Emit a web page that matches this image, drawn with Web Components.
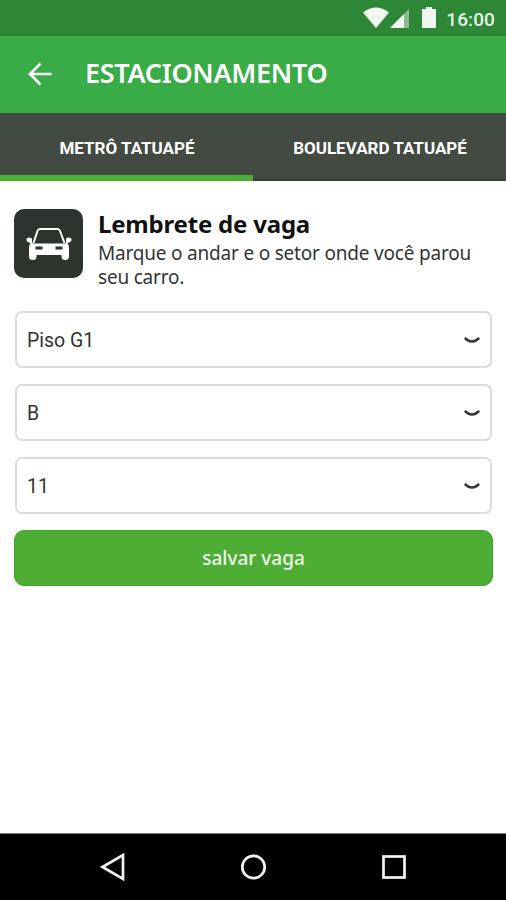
<!DOCTYPE html>
<html lang="pt-BR">
<head>
<meta charset="utf-8">
<title>Estacionamento</title>
<style>
    body {
        margin: 0;
        background: #fff;
    }
</style>
</head>
<body>
<parking-app></parking-app>

<script>
    const define = (name, html) => {
        const tmpl = document.createElement('template');
        tmpl.innerHTML = html;

        window.customElements.define(name, class extends HTMLElement {
            constructor() {
                super();
                this.attachShadow({ mode: 'open' });
                this.shadowRoot.appendChild(document.importNode(tmpl.content, true));
            }
        });
    };

    define('status-bar', /*html*/`
        <style>
            :host {
                display: flex;
                align-items: center;
                justify-content: flex-end;
                height: 36px;
                padding-right: 11px;
                box-sizing: border-box;
                background: #2d8736;
                color: #e6f3e6;
                font: 500 19px/36px Roboto, sans-serif;
            }
            svg { display: block; margin-right: 7px; }
            span { padding-top: 3px; letter-spacing: .1px; }
        </style>
        <svg width="76" height="36" viewBox="0 0 76 36" fill="#f1f8f1">
            <path d="M0 12.4Q13 2.8 26 12.4L13 28Z"/>
            <path d="M46 9v19H27Z" fill="#8bbd90"/>
            <path d="M41 14v14H27Z"/>
            <path d="M59 9h4V7h6v2h4v19H59Z"/>
        </svg>
        <span>16:00</span>`);

    define('app-header', /*html*/`
        <style>
            :host {
                display: flex;
                align-items: center;
                height: 77px;
                padding: 0 0 2px 28px;
                box-sizing: border-box;
                background: #39ab47;
                color: #fff;
            }
            svg { display: block; margin-right: 33px; }
            h1 {
                margin: 0;
                padding-bottom: 2px;
                font-size: 27px;
                font-weight: 600;
                line-height: 36px;
                letter-spacing: -.3px;
                white-space: nowrap;
            }
        </style>
        <svg width="24" height="24" viewBox="0 0 24 24" fill="none" stroke="#fff" stroke-width="2.6">
            <path d="M23.5 12H2M12.5 1.5L2 12l10.500 10.500"/>
        </svg>
        <h1><slot></slot></h1>`);

    define('tab-bar', /*html*/`
        <style>
            :host {
                display: flex;
                height: 68px;
                background: #434a42;
            }
            ::slotted(*) { flex: 1; }
        </style>
        <slot></slot>`);

    define('tab-item', /*html*/`
        <style>
            :host {
                display: flex;
                align-items: center;
                justify-content: center;
                box-sizing: border-box;
                padding: 3px 0 0 1px;
                border-bottom: 2px solid #3a3c39;
                color: #fff;
                font: 700 17px/24px Roboto, sans-serif;
                white-space: nowrap;
            }
            :host([selected]) {
                padding-top: 7px;
                border-bottom: 6px solid #4dae35;
            }
        </style>
        <slot></slot>`);

    define('reminder-intro', /*html*/`
        <style>
            :host { display: flex; gap: 15px; }
            .tile {
                display: block;
                flex: none;
                width: 69px;
                height: 69px;
                border-radius: 10px;
                background: #2c342d;
            }
            h2, p { margin: 0; color: #111; white-space: nowrap; }
            h2 {
                margin-top: -1px;
                padding-bottom: 1px;
                font-size: 24px;
                font-weight: 700;
                line-height: 32px;
                letter-spacing: -.2px;
            }
            p {
                color: #333;
                font-size: 19px;
                line-height: 24px;
                letter-spacing: -.2px;
            }
        </style>
        <svg class="tile" viewBox="0 0 69 69">
            <path d="M19.500 34L23.500 22Q24.200 20 26 20H43.500Q45.300 20 46 22L50.500 34" fill="none" stroke="#fff" stroke-width="2"/>
            <path fill="#fff" fill-rule="evenodd" d="M19 34.500h32l1-1V30q0-1.500 2.500-1.500 3 0 3 2 0 2.500-3 3l-1 .5q1.500 2 1.500 5v8.500q0 3.500-3.800 3.500-3.700 0-3.700-3.500V46h-25v1.500q0 3.500-3.700 3.500-3.800 0-3.800-3.500V39q0-3 1.500-5l-1-.500q-3-.5-3-3 0-2 3-2 2.500 0 2.500 1.500v3.500ZM21.500 37.500v3h7v-3ZM41.500 37.500v3h7v-3Z"/>
        </svg>
        <div>
            <h2><slot name="title"></slot></h2>
            <p><slot></slot></p>
        </div>`);

    define('select-field', /*html*/`
        <style>
            :host {
                display: flex;
                align-items: center;
                justify-content: space-between;
                height: 57px;
                margin: 0 1px;
                padding: 0 10px;
                box-sizing: border-box;
                border: 2px solid #dcdcdc;
                border-radius: 7px;
                color: #333;
                font: 400 19.500px/28px Roboto, sans-serif;
            }
            span { padding-top: 2px; }
            svg { display: block; }
        </style>
        <span><slot></slot></span>
        <svg width="16" height="8" viewBox="0 0 16 8" fill="none" stroke="#333" stroke-width="2.600">
            <path d="M.8 2L4 4.300Q8 6.800 12 4.300L15.200 2"/>
        </svg>`);

    define('save-button', /*html*/`
        <style>
            :host { display: block; }
            button {
                display: block;
                width: 100%;
                height: 56px;
                padding: 0;
                border: 1px solid #3fa526;
                border-radius: 10px;
                background: #4dad35;
                color: #f0faec;
                font: inherit;
                font-size: 19px;
                font-weight: 500;
            }
        </style>
        <button type="button"><slot></slot></button>`);

    define('nav-bar', /*html*/`
        <style>
            :host {
                display: flex;
                align-items: center;
                justify-content: space-between;
                height: 67px;
                padding: 0 97px 0 99px;
                box-sizing: border-box;
                border-top: 1px solid #777;
                background: #000;
            }
            svg { fill: none; stroke: #f2f2f2; stroke-width: 2.700; }
        </style>
        <svg width="30" height="30" viewBox="0 0 30 30"><path d="M3.500 15L24 3v24Z"/></svg>
        <svg width="30" height="30" viewBox="0 0 30 30"><circle cx="14.500" cy="15" r="11.200"/></svg>
        <svg width="30" height="30" viewBox="0 0 30 30"><rect x="4.500" y="4.500" width="21" height="21"/></svg>`);

    define('parking-app', /*html*/`
        <style>
            :host {
                display: flex;
                flex-direction: column;
                height: 900px;
                font-family: "Noto Sans", "Open Sans", sans-serif;
            }
            main {
                flex: 1;
                display: flex;
                flex-direction: column;
                padding: 28px 13px 0 14px;
            }
            form {
                display: flex;
                flex-direction: column;
                gap: 16px;
                margin-top: 22px;
            }
        </style>
        <status-bar></status-bar>
        <app-header>ESTACIONAMENTO</app-header>
        <tab-bar>
            <tab-item selected>METRÔ TATUAPÉ</tab-item>
            <tab-item>BOULEVARD TATUAPÉ</tab-item>
        </tab-bar>
        <main>
            <reminder-intro>
                <span slot="title">Lembrete de vaga</span>
                Marque o andar e o setor onde você parou<br>seu carro.
            </reminder-intro>
            <form>
                <select-field>Piso G1</select-field>
                <select-field>B</select-field>
                <select-field>11</select-field>
                <save-button>salvar vaga</save-button>
            </form>
        </main>
        <nav-bar></nav-bar>`);
</script>
</body>
</html>
